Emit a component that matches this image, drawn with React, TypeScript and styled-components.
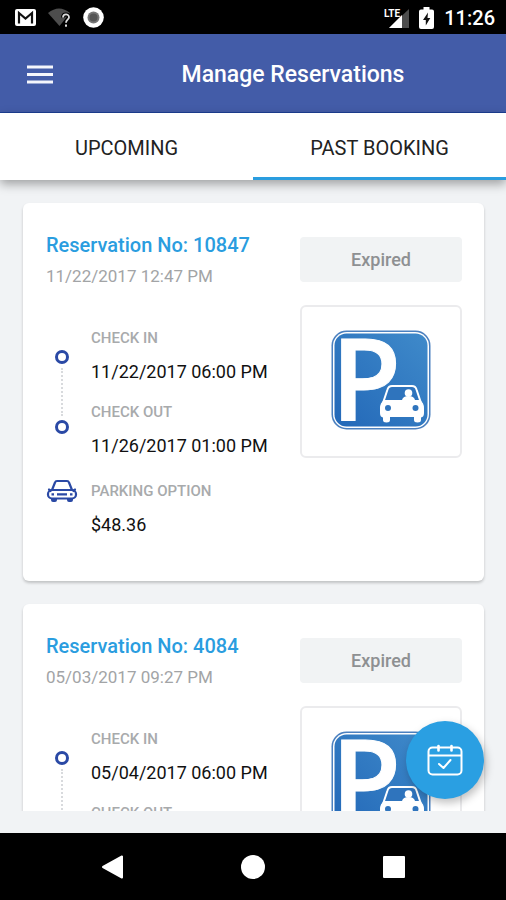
import React, { useState } from "react";
import styled, { createGlobalStyle } from "styled-components";

type Reservation = {
  number: string;
  createdAt: string;
  checkIn: string;
  checkOut: string;
  price: string;
};

const reservations: Reservation[] = [
  {
    number: "10847",
    createdAt: "11/22/2017 12:47 PM",
    checkIn: "11/22/2017 06:00 PM",
    checkOut: "11/26/2017 01:00 PM",
    price: "$48.36",
  },
  {
    number: "4084",
    createdAt: "05/03/2017 09:27 PM",
    checkIn: "05/04/2017 06:00 PM",
    checkOut: "05/06/2017 01:00 PM",
    price: "$24.18",
  },
];

const tabs = ["UPCOMING", "PAST BOOKING"];

const MailIcon = () => (
  <svg width="21" height="17" viewBox="0 0 21 17" aria-hidden="true">
    <rect width="21" height="17" rx="2" fill="#fff" />
    <path
      d="M4 14.500V4l6.500 5.500L17 4v10.500"
      fill="none"
      stroke="#111"
      strokeWidth="2.200"
    />
  </svg>
);

const WifiIcon = () => (
  <svg width="23" height="20" viewBox="0 0 23 20" aria-hidden="true">
    <path d="M0 5Q11-4 22 5L11.500 18z" fill="#4d4d4d" />
    <path
      d="M15 9.500c0-4 6-4 6-.3 0 2.500-3 2.600-3 5.800"
      fill="none"
      stroke="#000"
      strokeWidth="4"
    />
    <path
      d="M15 9.500c0-4 6-4 6-.3 0 2.500-3 2.600-3 5.600"
      fill="none"
      stroke="#ddd"
      strokeWidth="1.800"
    />
    <rect x="17" y="16.500" width="2" height="2.200" fill="#ddd" />
  </svg>
);

const RecordIcon = () => (
  <svg width="21" height="21" viewBox="0 0 21 21" aria-hidden="true">
    <circle cx="10.500" cy="10.500" r="10.300" fill="#fff" />
    <circle cx="10.500" cy="10.500" r="6" fill="#777" />
    <circle cx="10.500" cy="10.500" r="4" fill="#555" />
  </svg>
);

const SignalIcon = () => (
  <svg width="25" height="22" viewBox="0 0 25 22" aria-hidden="true">
    <path d="M25 2v19H5z" fill="#4d4d4d" />
    <path d="M18 8v13H5z" fill="#fff" />
    <path d="M0 0h15v11H5L0 12z" fill="#000" />
    <text
      x="0"
      y="10"
      fill="#fff"
      fontFamily="Roboto, sans-serif"
      fontSize="10"
      fontWeight="700"
    >
      LTE
    </text>
  </svg>
);

const BatteryIcon = () => (
  <svg width="15" height="22" viewBox="0 0 15 22" aria-hidden="true">
    <path
      d="M4.500 0h6v2.500H13a2 2 0 0 1 2 2V20a2 2 0 0 1-2 2H2a2 2 0 0 1-2-2V4.500a2 2 0 0 1 2-2h2.500z"
      fill="#fff"
    />
    <path d="M9 5.500L4 13H6.800v5.500L11.300 11H8.500z" fill="#111" />
  </svg>
);

const MenuIcon = () => (
  <svg width="26" height="19" viewBox="0 0 26 19" aria-hidden="true">
    <path d="M0 2h26M0 9.500h26M0 17h26" stroke="#f4f6fc" strokeWidth="3" />
  </svg>
);

const CarIcon = () => (
  <svg width="32" height="24" viewBox="0 0 32 24" aria-hidden="true">
    <g fill="none" stroke="#2a49a5" strokeWidth="2.200" strokeLinejoin="round">
      <path d="M6 11L9 3.500Q9.500 2 11 2h10q1.500 0 2 1.500L26 11" />
      <rect x="2" y="11" width="28" height="8.500" rx="4" />
      <path d="M4.500 12L3 10.500M27.500 12l1.500-1.500" strokeLinecap="round" />
      <path d="M11 15.300h10M5.500 15.300h2.500M24 15.300h2.500" />
    </g>
    <path
      d="M5 19h6v2a2 2 0 0 1-2 2H7a2 2 0 0 1-2-2zM21 19h6v2a2 2 0 0 1-2 2h-2a2 2 0 0 1-2-2z"
      fill="#2a49a5"
    />
  </svg>
);

const ParkingSign = () => (
  <svg
    width="100"
    height="100"
    viewBox="0 0 100 100"
    overflow="visible"
    role="img"
    aria-label="Parking"
  >
    <defs>
      <linearGradient id="signBlue" x1="0" y1="1" x2="1" y2="0">
        <stop offset="0" stopColor="#2368b8" />
        <stop offset="1" stopColor="#3f8aca" />
      </linearGradient>
    </defs>
    <rect x="0.500" y="0.500" width="99" height="99" rx="15" fill="#4b80bf" />
    <rect x="2" y="2" width="96" height="96" rx="14" fill="#fff" />
    <rect x="3.500" y="3.500" width="93" height="93" rx="12" fill="url(#signBlue)" />
    <text
      x="0"
      y="91"
      fill="#fff"
      stroke="#fff"
      strokeWidth="1"
      fontFamily="'Open Sans', sans-serif"
      fontSize="114"
      fontWeight="600"
    >
      P
    </text>
    <path
      d="M52 73L56.500 59.500Q57.500 56 61 56H81Q84.500 56 85.500 59.500L90 73z"
      fill="#2f74bd"
      stroke="#fff"
      strokeWidth="2"
    />
    <circle cx="77.500" cy="63" r="3.800" fill="#fff" />
    <path d="M71 70q1-4 6.500-4t6.500 4v3H71z" fill="#fff" />
    <path
      d="M53 70h36q4 3 4 8v5q0 4-3 4.500V90q0 2.500-3.500 2.500T83 90v-3H59v3q0 2.500-3.500 2.500T52 90v-2.500q-3-.5-3-4.500v-5q0-5 4-8z"
      fill="#fff"
    />
    <circle cx="57" cy="78" r="3" fill="#2f74bd" />
    <circle cx="84.500" cy="78" r="3" fill="#2f74bd" />
  </svg>
);

const CalendarIcon = () => (
  <svg width="36" height="32" viewBox="0 0 36 32" aria-hidden="true">
    <g
      fill="none"
      stroke="#fff"
      strokeWidth="2"
      strokeLinecap="round"
      strokeLinejoin="round"
    >
      <rect x="1.500" y="3.500" width="33" height="27" rx="4" />
      <path d="M2 11.500h32" />
      <path d="M11.500 2v4.500M24.500 2v4.500" strokeWidth="2.600" />
      <path d="M12 20l4.500 4 7-8" />
    </g>
  </svg>
);

const ReservationCard = ({ reservation }: { reservation: Reservation }) => {
  return (
    <Card>
      <Details>
        <CardTitle>Reservation No: {reservation.number}</CardTitle>
        <Created>{reservation.createdAt}</Created>
        <Stay>
          <Track>
            <Dot />
            <Dots />
            <Dot />
          </Track>
          <Fields>
            <Field>
              <Label>CHECK IN</Label>
              <Value>{reservation.checkIn}</Value>
            </Field>
            <Field>
              <Label>CHECK OUT</Label>
              <Value>{reservation.checkOut}</Value>
            </Field>
          </Fields>
        </Stay>
        <Option>
          <CarIcon />
          <Field>
            <Label>PARKING OPTION</Label>
            <Value>{reservation.price}</Value>
          </Field>
        </Option>
      </Details>
      <Aside>
        <StatusButton type="button" disabled>
          Expired
        </StatusButton>
        <Picture>
          <ParkingSign />
        </Picture>
      </Aside>
    </Card>
  );
};

const App = () => {
  const [activeTab, setActiveTab] = useState("PAST BOOKING");

  return (
    <Screen>
      <GlobalStyle />
      <StatusBar>
        <MailIcon />
        <WifiIcon />
        <RecordIcon />
        <StatusRight>
          <SignalIcon />
          <BatteryIcon />
          <Clock>11:26</Clock>
        </StatusRight>
      </StatusBar>
      <Header>
        <MenuButton type="button" aria-label="Menu">
          <MenuIcon />
        </MenuButton>
        <HeaderTitle>Manage Reservations</HeaderTitle>
      </Header>
      <Tabs>
        {tabs.map((tab) => (
          <Tab
            key={tab}
            type="button"
            $active={tab === activeTab}
            onClick={() => setActiveTab(tab)}
          >
            {tab}
          </Tab>
        ))}
      </Tabs>
      <Main>
        <List>
          {reservations.map((reservation) => (
            <ReservationCard
              key={reservation.number}
              reservation={reservation}
            />
          ))}
        </List>
        <FloatingButton type="button" aria-label="New reservation">
          <CalendarIcon />
        </FloatingButton>
      </Main>
      <NavBar>
        <NavButton type="button" aria-label="Back">
          <svg width="24" height="24" viewBox="0 0 24 24">
            <path
              d="M3 12L22 1.500v21z"
              fill="#fff"
              stroke="#fff"
              strokeWidth="2"
              strokeLinejoin="round"
            />
          </svg>
        </NavButton>
        <NavButton type="button" aria-label="Home">
          <svg width="24" height="24" viewBox="0 0 24 24">
            <circle cx="12" cy="12" r="12" fill="#fff" />
          </svg>
        </NavButton>
        <NavButton type="button" aria-label="Recent apps">
          <svg width="24" height="24" viewBox="0 0 24 24">
            <rect x="1" y="1" width="22" height="22" rx="1" fill="#fff" />
          </svg>
        </NavButton>
      </NavBar>
    </Screen>
  );
};

const GlobalStyle = createGlobalStyle`
  * {
    box-sizing: border-box;
  }
  body {
    margin: 0;
    background-color: #f1f3f5;
    font-family: Roboto, "Liberation Sans", sans-serif;
  }
  button {
    padding: 0;
    border: none;
    background: none;
    font-family: inherit;
  }
  svg {
    display: block;
    flex-shrink: 0;
  }
`;

const Screen = styled.div`
  display: flex;
  flex-direction: column;
  height: 100vh;
`;

const StatusBar = styled.div`
  display: flex;
  align-items: center;
  gap: 12px;
  height: 34px;
  padding: 1px 11px 0 15px;
  background-color: #000;
`;

const StatusRight = styled.div`
  display: flex;
  align-items: center;
  gap: 10px;
  margin-left: auto;
`;

const Clock = styled.span`
  color: #fff;
  font-size: 20px;
  font-weight: 500;
`;

const Header = styled.header`
  display: flex;
  height: 79px;
  padding-top: 2px;
  background-color: #435ca8;
  border-bottom: 1px solid #1c3f94;
`;

const MenuButton = styled.button`
  display: flex;
  align-items: center;
  justify-content: center;
  width: 80px;
`;

const HeaderTitle = styled.h1`
  flex: 1;
  margin: 0;
  color: #fff;
  font-size: 23px;
  font-weight: 500;
  line-height: 78px;
  text-align: center;
`;

const Tabs = styled.nav`
  display: flex;
  height: 67px;
  background-color: #fff;
  box-shadow: 0 4px 10px rgba(0, 0, 0, 0.35);
  z-index: 1;
`;

const Tab = styled.button<{ $active: boolean }>`
  flex: 1;
  padding-top: 2px;
  color: #222;
  font-size: 20px;
  border-top: 3px solid transparent;
  border-bottom: 3px solid
    ${({ $active }) => ($active ? "#2a9ddf" : "transparent")};
`;

const Main = styled.main`
  position: relative;
  display: flex;
  flex: 1;
  min-height: 0;
  padding-bottom: 22px;
`;

const List = styled.div`
  flex: 1;
  padding: 23px 22px 0 23px;
  overflow-y: auto;
  scrollbar-width: none;
`;

const Card = styled.article`
  display: flex;
  justify-content: space-between;
  margin-bottom: 23px;
  padding: 31px 22px 44px 23px;
  background-color: #fff;
  border-radius: 6px;
  box-shadow: 0 2px 3px rgba(0, 0, 0, 0.2);
`;

const Details = styled.div`
  flex: 1;
`;

const CardTitle = styled.h2`
  margin: 0 0 10px;
  color: #2a9ddf;
  font-size: 20px;
  font-weight: 500;
  line-height: 22px;
`;

const Created = styled.p`
  margin: 0 0 40px;
  color: #a2a4a6;
  font-size: 17px;
  line-height: 20px;
`;

const Stay = styled.div`
  display: flex;
  align-items: center;
  gap: 13px;
  margin-bottom: 21px;
`;

const Track = styled.div`
  display: flex;
  flex-direction: column;
  align-items: center;
  gap: 4px;
  width: 32px;
`;

const Dot = styled.span`
  width: 14px;
  height: 14px;
  border: 3px solid #2a49a5;
  border-radius: 50%;
`;

const Dots = styled.span`
  height: 48px;
  border-left: 2px dotted #d8dadd;
`;

const Fields = styled.div`
  display: flex;
  flex-direction: column;
  gap: 16px;
`;

const Field = styled.div`
  display: flex;
  flex-direction: column;
  gap: 10px;
`;

const Label = styled.span`
  color: #a8aaac;
  font-size: 15px;
  font-weight: 500;
  line-height: 24px;
`;

const Value = styled.span`
  color: #111;
  font-size: 18px;
  line-height: 24px;
`;

const Option = styled.div`
  display: flex;
  gap: 13px;
`;

const Aside = styled.div`
  display: flex;
  flex-direction: column;
  gap: 23px;
  width: 162px;
  padding-top: 3px;
`;

const StatusButton = styled.button`
  height: 45px;
  color: #8e9092;
  background-color: #f1f3f4;
  border-radius: 4px;
  font-size: 18px;
  font-weight: 500;
`;

const Picture = styled.div`
  display: flex;
  align-items: center;
  justify-content: center;
  height: 153px;
  padding-bottom: 3px;
  border: 2px solid #ebebed;
  border-radius: 6px;
`;

const FloatingButton = styled.button`
  position: absolute;
  right: 22px;
  bottom: 34px;
  display: flex;
  align-items: center;
  justify-content: center;
  width: 78px;
  height: 78px;
  background-color: #2a9fe2;
  border-radius: 50%;
  box-shadow: 2px 4px 8px rgba(0, 0, 0, 0.25);
`;

const NavBar = styled.nav`
  display: flex;
  align-items: center;
  justify-content: center;
  gap: 117px;
  height: 67px;
  background-color: #000;
`;

const NavButton = styled.button`
  width: 24px;
  height: 24px;
`;

export default App;
